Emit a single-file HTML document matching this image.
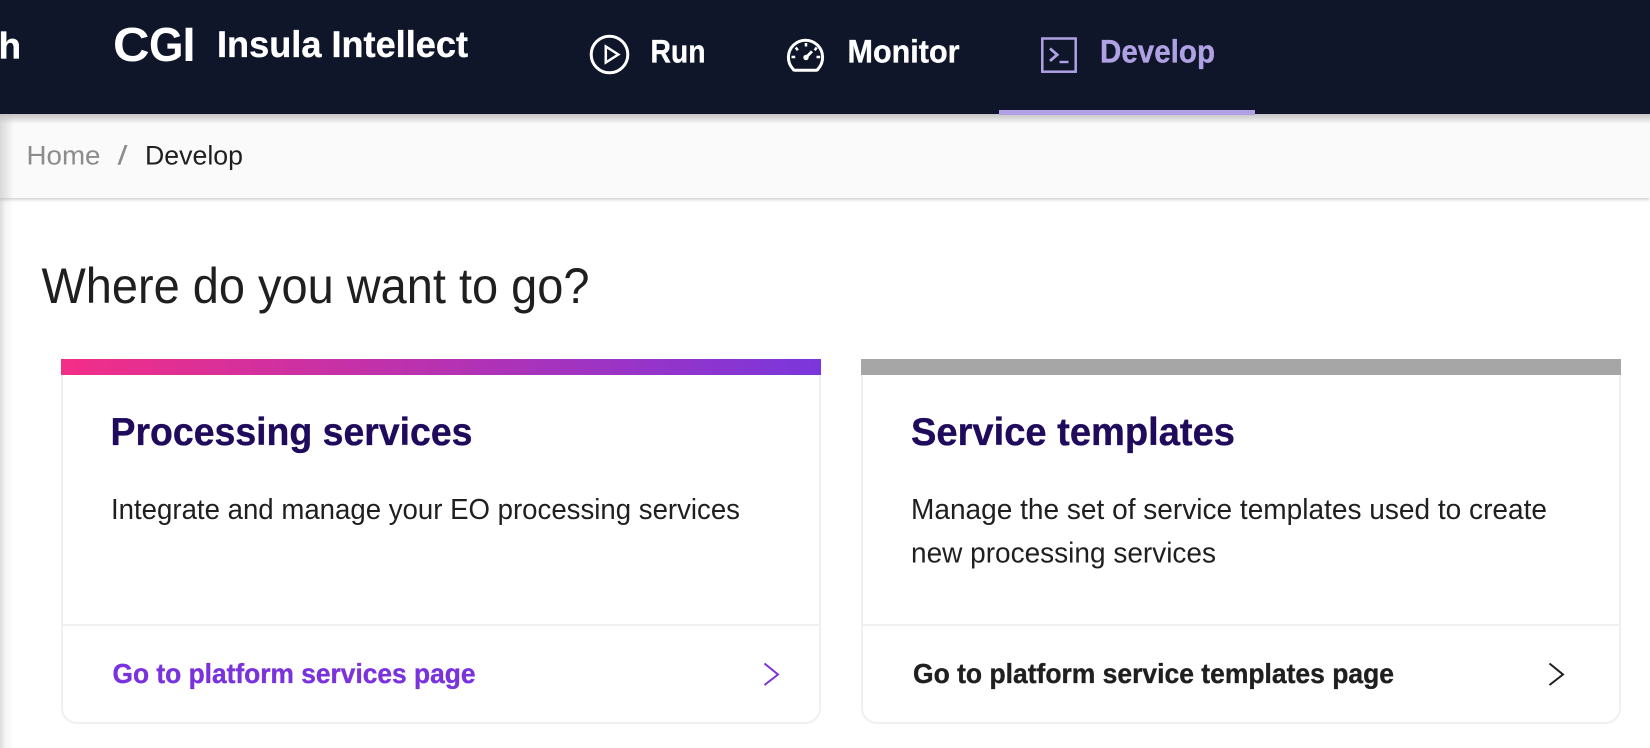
<!DOCTYPE html>
<html><head><meta charset="utf-8"><style>
html,body{margin:0;padding:0;width:1650px;height:748px;overflow:hidden;background:#fff}
.a{position:absolute}
svg{position:absolute;left:0;top:0}
text{font-family:"Liberation Sans",sans-serif}
.b{font-weight:700;stroke-width:.35}
</style></head><body>
<div class="a" style="left:0;top:114px;width:14px;height:634px;background:linear-gradient(90deg,#dcdcdc,#f5f5f5 40%,rgba(255,255,255,0))"></div>
<div class="a" style="left:0;top:114px;width:1650px;height:84px;background:#fafafa;box-shadow:0 1px 4px rgba(0,0,0,.25)"></div>
<div class="a" style="left:0;top:114px;width:14px;height:84px;background:linear-gradient(90deg,#d8d8d8,rgba(250,250,250,0))"></div>
<div class="a" style="left:0;top:114px;width:1650px;height:10px;background:linear-gradient(#c4c4c4,rgba(250,250,250,0))"></div>
<div class="a" style="left:0;top:0;width:1650px;height:114px;background:#0f1629"></div>
<div class="a" style="left:999px;top:110px;width:256px;height:5px;background:#b0a1e4"></div>
<div class="a" style="left:61px;top:365px;width:760px;height:358.5px;box-sizing:border-box;border:2px solid #f0f0f0;border-radius:0 0 16px 16px;background:#fff"></div>
<div class="a" style="left:861px;top:365px;width:760px;height:358.5px;box-sizing:border-box;border:2px solid #f0f0f0;border-radius:0 0 16px 16px;background:#fff"></div>
<div class="a" style="left:62px;top:624px;width:758px;height:2px;background:#f0f0f0"></div>
<div class="a" style="left:862px;top:624px;width:758px;height:2px;background:#f0f0f0"></div>
<div class="a" style="left:61px;top:359px;width:760px;height:16px;background:linear-gradient(90deg,#f32e87,#7a36dc)"></div>
<div class="a" style="left:861px;top:359px;width:760px;height:16px;background:#a6a6a6"></div>
<svg width="1650" height="748" viewBox="0 0 1650 748">
<text class="b" x="-1.500" y="58.500" font-size="37" fill="#fff" stroke="#fff">h</text>
<text class="b" x="113" y="61" font-size="48.500" fill="#fff" textLength="36.500" lengthAdjust="spacingAndGlyphs">C</text>
<text class="b" x="149" y="61" font-size="48.500" fill="#fff" textLength="34.500" lengthAdjust="spacingAndGlyphs">G</text>
<text class="b" x="182.500" y="61" font-size="48.500" fill="#fff" textLength="13" lengthAdjust="spacingAndGlyphs">I</text>
<text class="b" x="217" y="57" font-size="37.500" fill="#fff" stroke="#fff" textLength="251" lengthAdjust="spacingAndGlyphs">Insula Intellect</text>
<circle cx="609.500" cy="54.500" r="18.300" fill="none" stroke="#fff" stroke-width="3"/>
<path d="M605.800 46.500v16l12.500-8z" fill="none" stroke="#fff" stroke-width="2.500" stroke-linejoin="miter"/>
<text class="b" x="650.500" y="62.500" font-size="32" fill="#fff" stroke="#fff" textLength="55" lengthAdjust="spacingAndGlyphs">Run</text>
<path d="M795 70.200H816Q817.500 70.200 818 69A17.100 17.100 0 1 0 793 69Q793.500 70.200 795 70.200Z" fill="none" stroke="#fff" stroke-width="3" stroke-linejoin="round"/>
<path d="M806 43v3.500M795.800 47.500l2 2.800M816.700 47.500l-2 2.800M791.500 57h3.700M816.500 57h3.700" stroke="#fff" stroke-width="2.500" fill="none"/>
<path d="M806 57.500L812 51.300" stroke="#fff" stroke-width="2.800"/><circle cx="806" cy="57.500" r="2.700" fill="#fff"/>
<text class="b" x="847.500" y="62.500" font-size="32" fill="#fff" stroke="#fff" textLength="112" lengthAdjust="spacingAndGlyphs">Monitor</text>
<rect x="1042.300" y="38.500" width="33.400" height="33.200" fill="none" stroke="#b0a1e4" stroke-width="2.500"/>
<path d="M1050 48.500l7.200 6.200-7.200 6.200" fill="none" stroke="#b0a1e4" stroke-width="2.800"/>
<path d="M1059.500 62h9" stroke="#b0a1e4" stroke-width="2.400"/>
<text class="b" x="1100" y="62.500" font-size="32" fill="#b0a1e4" stroke="#b0a1e4" textLength="115" lengthAdjust="spacingAndGlyphs">Develop</text>
<text x="26.500" y="164.500" font-size="26.500" fill="#8c8c8c" textLength="74" lengthAdjust="spacingAndGlyphs">Home</text>
<text x="117.500" y="164.500" font-size="26.500" fill="#8c8c8c" textLength="10" lengthAdjust="spacingAndGlyphs">/</text>
<text x="145" y="164.500" font-size="26.500" fill="#1f1f1f" textLength="98" lengthAdjust="spacingAndGlyphs">Develop</text>
<text x="41.500" y="303" font-size="50" fill="#1f1f1f" textLength="548" lengthAdjust="spacingAndGlyphs">Where do you want to go?</text>
<text class="b" x="110.500" y="445" font-size="39" fill="#1f0a5c" stroke="#1f0a5c" textLength="362" lengthAdjust="spacingAndGlyphs">Processing services</text>
<text x="111" y="519" font-size="28.500" fill="#1f1f1f" textLength="629" lengthAdjust="spacingAndGlyphs">Integrate and manage your EO processing services</text>
<text class="b" x="112.500" y="683" font-size="27.500" fill="#7a33dc" stroke="#7a33dc" textLength="363" lengthAdjust="spacingAndGlyphs">Go to platform services page</text>
<path d="M764.500 663.500L778 674.500L764.500 685" fill="none" stroke="#7a33dc" stroke-width="2"/>
<text class="b" x="911" y="445" font-size="39" fill="#1f0a5c" stroke="#1f0a5c" textLength="324" lengthAdjust="spacingAndGlyphs">Service templates</text>
<text x="911" y="519" font-size="28.500" fill="#1f1f1f" textLength="636" lengthAdjust="spacingAndGlyphs">Manage the set of service templates used to create</text>
<text x="911" y="562.500" font-size="28.500" fill="#1f1f1f" textLength="305" lengthAdjust="spacingAndGlyphs">new processing services</text>
<text class="b" x="913" y="683" font-size="27.500" fill="#1f1f1f" stroke="#1f1f1f" textLength="481" lengthAdjust="spacingAndGlyphs">Go to platform service templates page</text>
<path d="M1549.500 663.500L1563 674.500L1549.500 685" fill="none" stroke="#1f1f1f" stroke-width="2"/>
</svg>
</body></html>
